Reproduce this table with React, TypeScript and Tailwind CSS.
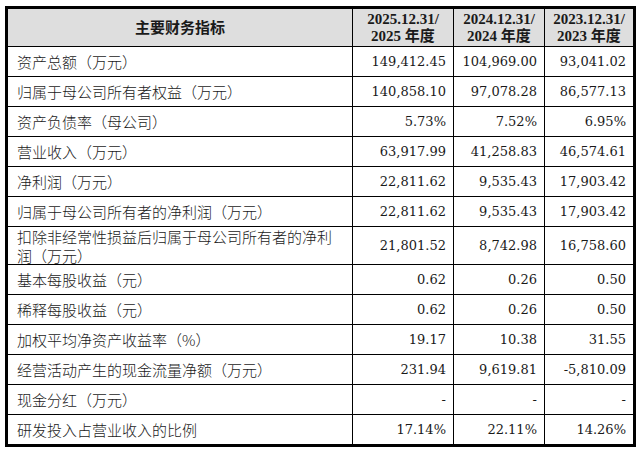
const rows: { label: React.ReactNode; v: string[]; tall?: boolean }[] = [
  { label: "资产总额（万元）", v: ["149,412.45", "104,969.00", "93,041.02"] },
  { label: "归属于母公司所有者权益（万元）", v: ["140,858.10", "97,078.28", "86,577.13"] },
  { label: "资产负债率（母公司）", v: ["5.73%", "7.52%", "6.95%"] },
  { label: "营业收入（万元）", v: ["63,917.99", "41,258.83", "46,574.61"] },
  { label: "净利润（万元）", v: ["22,811.62", "9,535.43", "17,903.42"] },
  { label: "归属于母公司所有者的净利润（万元）", v: ["22,811.62", "9,535.43", "17,903.42"] },
  {
    label: (
      <>
        扣除非经常性损益后归属于母公司所有者的净利
        <br />
        润（万元）
      </>
    ),
    v: ["21,801.52", "8,742.98", "16,758.60"],
    tall: true,
  },
  { label: "基本每股收益（元）", v: ["0.62", "0.26", "0.50"] },
  { label: "稀释每股收益（元）", v: ["0.62", "0.26", "0.50"] },
  { label: "加权平均净资产收益率（%）", v: ["19.17", "10.38", "31.55"] },
  { label: "经营活动产生的现金流量净额（万元）", v: ["231.94", "9,619.81", "-5,810.09"] },
  { label: "现金分红（万元）", v: ["-", "-", "-"] },
  { label: "研发投入占营业收入的比例", v: ["17.14%", "22.11%", "14.26%"] },
];

const years = ["2025", "2024", "2023"];

const cols = "grid grid-cols-[345px_101px_91px_88px]";
const cjk = "font-['Noto_Sans_CJK_SC',sans-serif]";
const num = "font-['DejaVu_Serif',serif]";

export default function App() {
  return (
    <div className="bg-white w-[640px] h-[454px] pt-[6px] pl-[5px]">
      <div className="w-[631px] border-[3px] border-black text-[#1a1a1a]">
        {/* header */}
        <div className={`${cols} h-[38px] bg-[#dedede] border-b border-black`}>
          <div className={`${cjk} flex items-center justify-center border-r border-black text-[15px] font-bold`}>
            主要财务指标
          </div>
          {years.map((y, i) => (
            <div
              key={y}
              className={`flex flex-col items-center justify-center leading-[17px] text-[15px] font-bold font-['Liberation_Serif','Noto_Sans_CJK_SC',serif] ${
                i < 2 ? "border-r border-black" : ""
              }`}
            >
              <span>{y}.12.31/</span>
              <span>{y} 年度</span>
            </div>
          ))}
        </div>

        {rows.map((r, idx) => {
          const last = idx === rows.length - 1;
          return (
            <div
              key={idx}
              className={`${cols} ${r.tall ? "h-[38px]" : last ? "h-[29px]" : "h-[30px]"} ${
                last ? "" : "border-b border-black"
              }`}
            >
              <div className={`${cjk} flex items-center pl-[9px] border-r border-black text-[15px] leading-[19px] font-light`}>
                <span>{r.label}</span>
              </div>
              {r.v.map((val, i) => (
                <div
                  key={i}
                  className={`${num} flex items-center justify-end pr-[7px] text-[13px] ${
                    i < 2 ? "border-r border-black" : ""
                  }`}
                >
                  {val}
                </div>
              ))}
            </div>
          );
        })}
      </div>
    </div>
  );
}
